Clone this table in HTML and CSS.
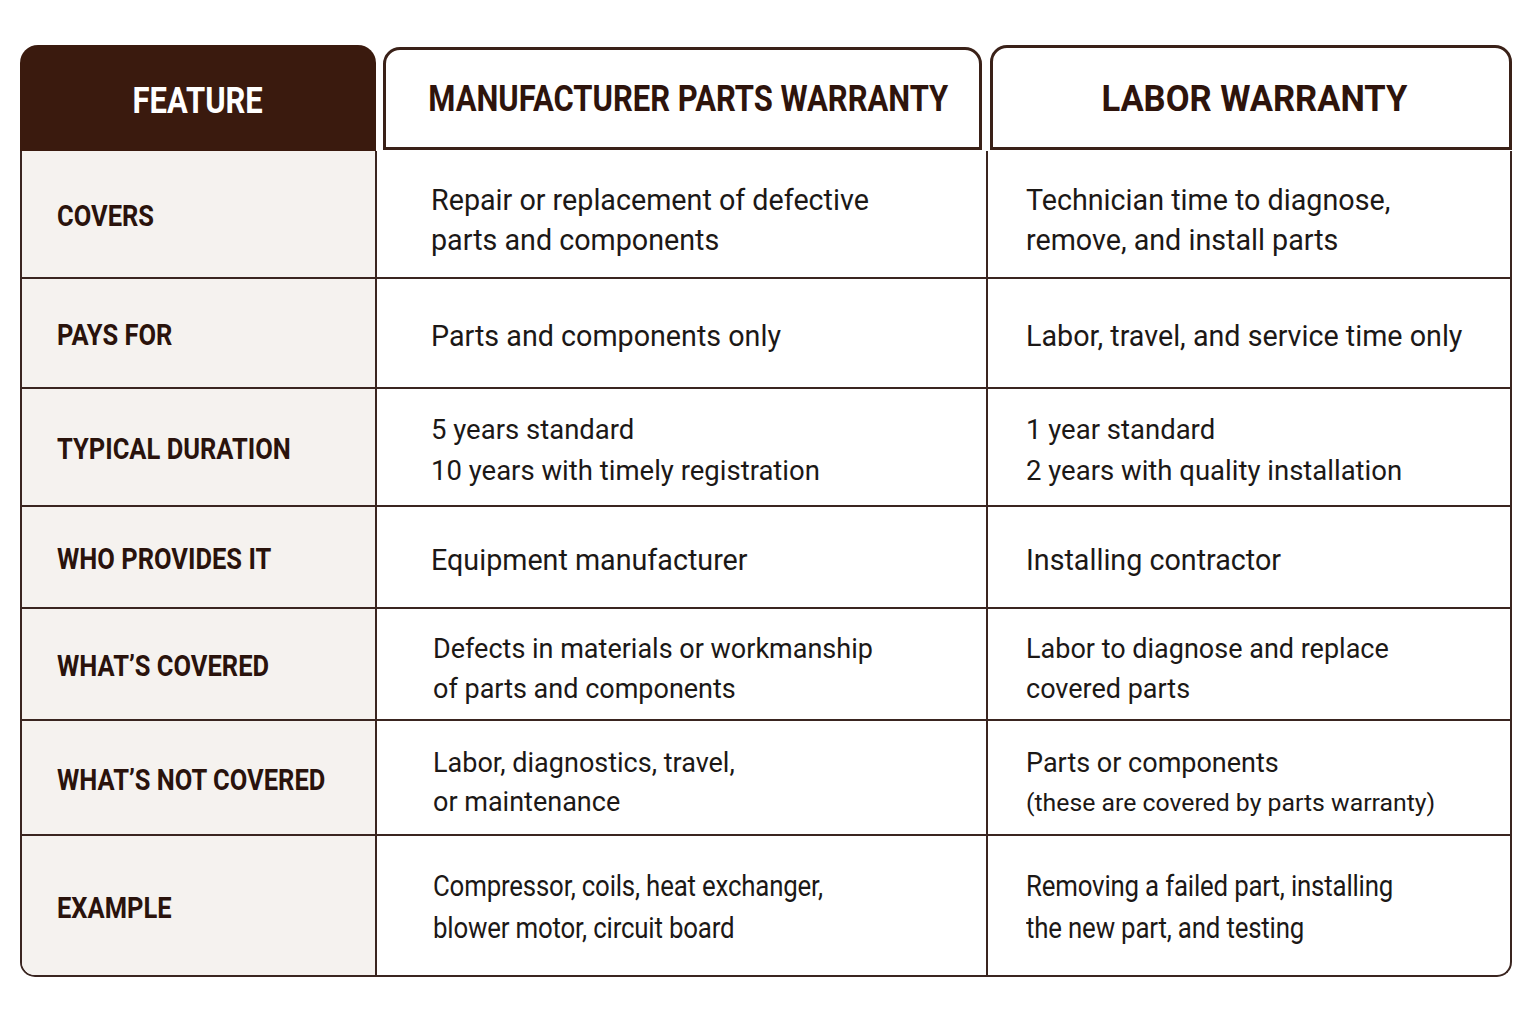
FILE: index.html
```html
<!DOCTYPE html>
<html lang="en">
<head>
<meta charset="utf-8">
<title>Parts vs Labor Warranty</title>
<link rel="stylesheet" href="styles.css">
</head>
<body>
<div class="table">
  <div class="head">
    <div class="h h-feature"><span class="sq">FEATURE</span></div>
    <div class="h h-box h-parts"><span class="sq">MANUFACTURER PARTS WARRANTY</span></div>
    <div class="h h-box h-labor"><span class="sq sq-wide">LABOR WARRANTY</span></div>
  </div>
  <div class="body">
    <div class="row r1">
      <div class="cell label"><span class="lsq">COVERS</span></div>
      <div class="cell c2">Repair or replacement of defective<br>parts and components</div>
      <div class="cell c3">Technician time to diagnose,<br>remove, and install parts</div>
    </div>
    <div class="row r2">
      <div class="cell label"><span class="lsq">PAYS FOR</span></div>
      <div class="cell c2">Parts and components only</div>
      <div class="cell c3">Labor, travel, and service time only</div>
    </div>
    <div class="row r3">
      <div class="cell label"><span class="lsq">TYPICAL DURATION</span></div>
      <div class="cell c2">5 years standard<br>10 years with timely registration</div>
      <div class="cell c3">1 year standard<br>2 years with quality installation</div>
    </div>
    <div class="row r4">
      <div class="cell label"><span class="lsq">WHO PROVIDES IT</span></div>
      <div class="cell c2">Equipment manufacturer</div>
      <div class="cell c3">Installing contractor</div>
    </div>
    <div class="row r5">
      <div class="cell label"><span class="lsq">WHAT’S COVERED</span></div>
      <div class="cell c2">Defects in materials or workmanship<br>of parts and components</div>
      <div class="cell c3">Labor to diagnose and replace<br>covered parts</div>
    </div>
    <div class="row r6">
      <div class="cell label"><span class="lsq">WHAT’S NOT COVERED</span></div>
      <div class="cell c2">Labor, diagnostics, travel,<br>or maintenance</div>
      <div class="cell c3">Parts or components<br><span class="small">(these are covered by parts warranty)</span></div>
    </div>
    <div class="row r7">
      <div class="cell label"><span class="lsq">EXAMPLE</span></div>
      <div class="cell c2 tight"><span class="tsq">Compressor, coils, heat exchanger,</span><span class="tsq">blower motor, circuit board</span></div>
      <div class="cell c3 tight"><span class="tsq">Removing a failed part, installing</span><span class="tsq">the new part, and testing</span></div>
    </div>
  </div>
</div>
</body>
</html>
```
FILE: styles.css
```css
* { box-sizing: border-box; }
html, body { margin: 0; padding: 0; background: #ffffff; }
body { font-family: Roboto, "Liberation Sans", sans-serif; color: #1c1816; }

.table {
  width: 1492px;
  margin: 45px 0 0 20px;
}

.head {
  display: flex;
  align-items: flex-start;
  height: 106px;
}
.h {
  display: flex;
  align-items: center;
  justify-content: center;
  font-weight: 700;
  font-size: 36px;
  color: #2e140c;
  white-space: nowrap;
}
.sq {
  display: inline-block;
  transform: scaleX(0.86);
}
.sq-wide {
  transform: scaleX(0.96);
}
.h-feature {
  width: 356px;
  height: 106px;
  background: #3a1a0e;
  color: #ffffff;
  border-radius: 18px 18px 0 0;
  padding-top: 6px;
}
.h-box {
  border: 3px solid #3a2118;
  border-radius: 17px 17px 0 0;
  background: #ffffff;
}
.h-parts {
  width: 599px;
  height: 103px;
  margin: 2px 0 0 7px;
  padding-left: 12px;
}
.h-labor {
  width: 522px;
  height: 105px;
  margin: 0 0 0 8px;
  padding-top: 2px;
  padding-left: 6px;
}

.body {
  border: 2px solid #3a2520;
  border-top: none;
  border-radius: 0 0 15px 15px;
  overflow: hidden;
}
.row {
  display: grid;
  grid-template-columns: 355px 611px 1fr;
  border-bottom: 2px solid #3a2520;
}
.row:last-child { border-bottom: none; }
.r1 { height: 128px; }
.r2 { height: 110px; }
.r3 { height: 118px; }
.r4 { height: 102px; }
.r5 { height: 112px; }
.r6 { height: 115px; }
.r7 { height: 139px; }

.cell {
  display: flex;
  flex-direction: column;
  justify-content: center;
  font-size: 28.7px;
  line-height: 40px;
}
.label {
  background: #f5f2ef;
  border-right: 2px solid #3a2520;
  padding-left: 35px;
  padding-top: 4px;
  font-weight: 700;
  font-size: 30px;
  color: #2a130c;
  white-space: nowrap;
}
.lsq {
  display: inline-block;
  transform: scaleX(0.85);
  transform-origin: left center;
}
.c2 {
  border-right: 2px solid #3a2520;
  padding-left: 54px;
  padding-top: 6px;
}
.c3 {
  padding-left: 38px;
  padding-top: 6px;
}
.r3 .c2, .r3 .c3 { font-size: 27.5px; line-height: 41px; }
.r5 .c2, .r5 .c3 { font-size: 27px; }
.r6 .c2, .r6 .c3 { font-size: 27px; line-height: 39px; }
.r1 .c2, .r1 .c3 { padding-top: 12px; }
.r5 .c2, .r5 .c3 { padding-top: 10px; }
.r6 .c2, .r6 .c3 { padding-top: 10px; }
.r7 .c2, .r7 .c3 { padding-top: 2px; }
.r5 .c2, .r6 .c2, .r7 .c2 { padding-left: 56px; }
.tight {
  line-height: 42px;
  align-items: flex-start;
}
.tsq {
  display: block;
  white-space: nowrap;
  transform: scaleX(0.9);
  transform-origin: left center;
  letter-spacing: -0.2px;
}
.small {
  font-size: 24.8px;
}
```
